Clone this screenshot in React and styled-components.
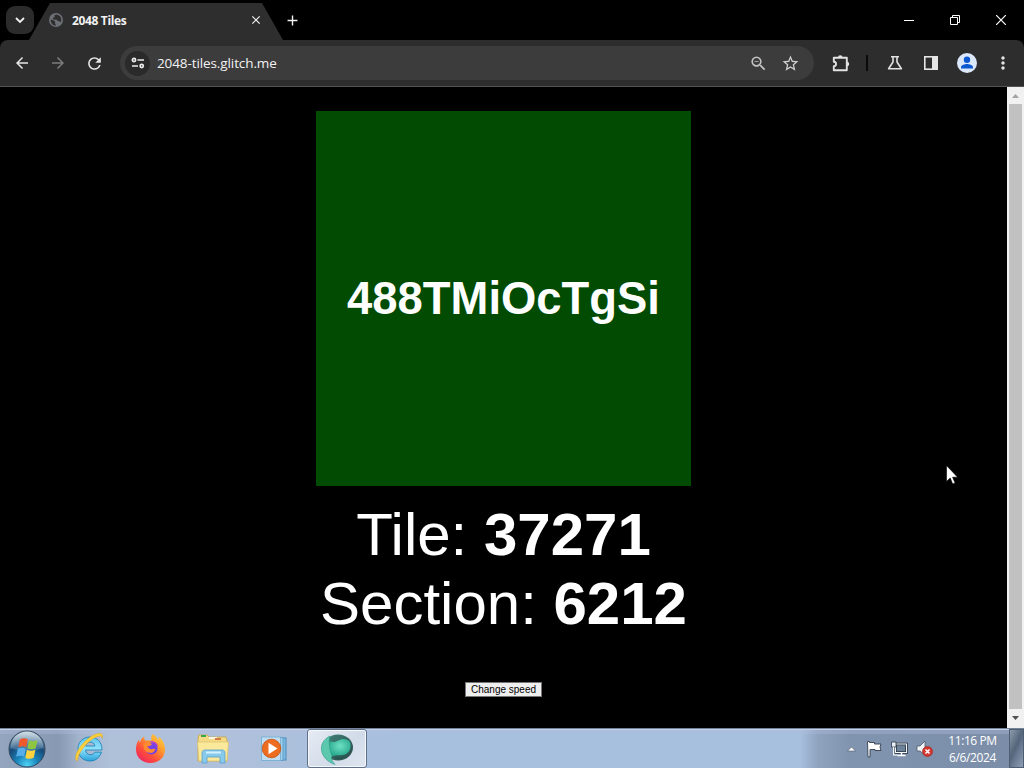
import React from 'react'
import styled, { createGlobalStyle } from 'styled-components'
import {
  MdAdd,
  MdArrowBack,
  MdArrowForward,
  MdClose,
  MdMoreVert,
  MdRefresh,
  MdStarBorder,
  MdZoomOut,
} from 'react-icons/md'

const GlobalStyle = createGlobalStyle`
  * { box-sizing: border-box; }
  body {
    margin: 0;
    background: #000;
    overflow: hidden;
  }
  svg { display: block; flex-shrink: 0; }
`

const Screen = styled.div`
  position: relative;
  width: 1024px;
  height: 768px;
  display: flex;
  flex-direction: column;
  background: #000;
  overflow: hidden;
`

/* browser chrome */

const TabStrip = styled.header`
  height: 40px;
  display: flex;
  align-items: center;
  padding-left: 6px;
  color: #f1f1f1;
`

const TabSearch = styled.button`
  width: 28px;
  height: 28px;
  padding: 0;
  border: none;
  border-radius: 9px;
  background: #2b2b2b;
  display: flex;
  align-items: center;
  justify-content: center;
`

const Tab = styled.div`
  width: 254px;
  height: 37px;
  align-self: flex-end;
  margin-left: -5px;
  padding: 0 20px 3px 20px;
  background: #2e2e2e;
  clip-path: polygon(0 100%, 21px 0, 233px 0, 100% 100%);
  display: flex;
  align-items: center;
`

const TabTitle = styled.span`
  flex: 1;
  margin-left: 9px;
  padding-top: 1px;
  font: 700 12px/16px 'Open Sans', sans-serif;
  letter-spacing: -0.35px;
  white-space: nowrap;
`

const NewTab = styled.div`
  width: 18px;
  display: flex;
  justify-content: center;
`

const WindowButtons = styled.div`
  margin-left: auto;
  display: flex;
`

const WindowButton = styled.div`
  width: 46px;
  height: 40px;
  display: flex;
  align-items: center;
  justify-content: center;
`

const Toolbar = styled.nav`
  height: 47px;
  display: flex;
  align-items: center;
  padding-left: 4px;
  background: #2d2d2d;
  border-bottom: 1px solid #545454;
  border-radius: 8px 8px 0 0;
  color: #e6e6e6;
`

const Slot = styled.div`
  width: ${(p) => p.$w || 36}px;
  height: 34px;
  flex-shrink: 0;
  display: flex;
  align-items: center;
  justify-content: center;
  color: ${(p) => p.$color || 'inherit'};
`

const AddressBar = styled.div`
  width: 694px;
  height: 34px;
  flex-shrink: 0;
  margin-left: 8px;
  padding: 0 8px 0 5px;
  border-radius: 17px;
  background: #3c3c3c;
  display: flex;
  align-items: center;
`

const SiteInfo = styled.div`
  width: 25px;
  height: 25px;
  border-radius: 50%;
  background: #2a2a2a;
  display: flex;
  align-items: center;
  justify-content: center;
`

const Url = styled.span`
  flex: 1;
  margin-left: 7px;
  color: #f2f2f2;
  font: 13.5px/18px 'Open Sans', sans-serif;
  letter-spacing: -0.1px;
`

const Divider = styled.div`
  width: 2px;
  height: 16px;
  margin: 0 8px 0 -1px;
  background: #0a0a0a;
`

/* page */

const Viewport = styled.div`
  height: 641px;
  display: flex;
`

const Page = styled.main`
  flex: 1;
  padding-top: 24px;
  display: flex;
  flex-direction: column;
  align-items: center;
  color: #fff;
  font-family: 'Liberation Sans', Arial, sans-serif;
`

const Tile = styled.div`
  width: 375px;
  height: 375px;
  background: #024b02;
  display: flex;
  align-items: center;
  justify-content: center;
  font-size: 45.4px;
  font-weight: 700;
`

const Stats = styled.div`
  margin-top: 14px;
  font-size: 60px;
  line-height: 69px;
  text-align: center;
  white-space: nowrap;
`

const SpeedButton = styled.button`
  width: 77px;
  height: 15px;
  margin-top: 44px;
  padding: 0;
  border: 1px solid #767676;
  background: #efefef;
  color: #000;
  font: 10px/12px 'Liberation Sans', Arial, sans-serif;
  white-space: nowrap;
`

const ScrollTrack = styled.div`
  width: 17px;
  display: flex;
  flex-direction: column;
  align-items: center;
  background: #f1f1f1;
`

const ScrollArrow = styled.div`
  width: 17px;
  height: 17px;
  display: flex;
  align-items: center;
  justify-content: center;
`

const Thumb = styled.div`
  width: 13px;
  height: 605px;
  background: #c1c1c1;
`

/* taskbar */

const Taskbar = styled.footer`
  height: 40px;
  display: flex;
  align-items: center;
  border-top: 1px solid #75839a;
  box-shadow: inset 0 1px 0 #c3d0e6, inset 0 5px 0 rgba(178, 190, 224, 0.35);
  background: linear-gradient(90deg, #94a6bf 0, #8799b3 58px, #a3b4cc 80px, #afc0d9 110px, #aec0db 240px, #a7c0de 400px, #a7c0de 800px, #8fa3bf 818px, #8094b0 850px, #7b8da7 1024px);
`

const TaskItem = styled.div`
  width: ${(p) => p.$w || 61}px;
  height: 39px;
  display: flex;
  align-items: center;
  justify-content: center;
  ${(p) =>
    p.$active &&
    `
    border: 1px solid #5f7088;
    border-radius: 3px;
    box-shadow: inset 0 0 0 1px #f4f7fb;
    background: linear-gradient(135deg, #e6ebf3, #d2dbe9 60%, #dfe6f0);
  `}
`

const Tray = styled.div`
  margin-left: auto;
  height: 100%;
  display: flex;
  align-items: center;
`

const Clock = styled.div`
  width: 73px;
  color: #fff;
  font: 12px/17px 'Open Sans', sans-serif;
  letter-spacing: -0.4px;
  text-align: center;
  white-space: nowrap;
`

const ShowDesktop = styled.div`
  width: 15px;
  height: 100%;
  border: 1px solid #4d5d72;
  background: linear-gradient(115deg, #8c9aab, #55657a 45%, #66788f 60%, #8fa0b5);
`

const Pointer = styled.div`
  position: absolute;
  left: 946px;
  top: 465px;
`

const Globe = () => (
  <svg width="14" height="14" viewBox="0 0 14 14">
    <circle cx="7" cy="7" r="7" fill="#6c7075" />
    <path d="M1.7 6.2l3 1.2 1.4 1.2v2l1 2C4 12.6 1.4 10 1.7 6.2zM7 1.600l-1.600 1 .3 1.500-2 1 .5 1.500 3.500.2 1.400 1.500 1.200-.2.700 1.200 1-.7C13.200 5 10.700 1.700 7 1.600z" fill="#2e2e2e" />
  </svg>
)

const TuneIcon = () => (
  <svg width="14" height="12" viewBox="0 0 14 12" fill="none" stroke="#ededed" strokeWidth="1.7">
    <circle cx="3" cy="3" r="1.6" />
    <path d="M6.5 3H13M1 9h6" />
    <circle cx="10.7" cy="9" r="1.6" />
  </svg>
)

const PuzzleIcon = () => (
  <svg width="18" height="18" viewBox="0 0 18 18">
    <path d="M1.800 3.800h13v12.400h-13v-4a2.200 2.200 0 0 0 0-4.400z" fill="none" stroke="#e2e2e2" strokeWidth="1.900" strokeLinejoin="round" />
    <path d="M6 3.500a2.300 2.300 0 0 1 4.600 0zM15 7.800a2.200 2.200 0 0 1 0 4.400z" fill="#e2e2e2" />
  </svg>
)

const FlaskIcon = () => (
  <svg width="16" height="16" viewBox="0 0 16 16" fill="none" stroke="#e2e2e2" strokeWidth="1.6" strokeLinejoin="round">
    <path d="M4 1.800h8M6 2v5L1.600 13.800h12.800L10 7V2" />
  </svg>
)

const SidePanelIcon = () => (
  <svg width="14" height="14" viewBox="0 0 14 14">
    <rect x="0.8" y="0.8" width="12.4" height="12.4" fill="none" stroke="#e6e6e6" strokeWidth="1.6" />
    <path d="M8 0h6v14H8z" fill="#e6e6e6" />
  </svg>
)

const Avatar = () => (
  <svg width="20" height="20" viewBox="0 0 20 20">
    <circle cx="10" cy="10" r="10" fill="#dbe7fb" />
    <circle cx="10" cy="6.8" r="3.2" fill="#0b57d0" />
    <path d="M4 15.600v-1.300c0-2.300 4-3.300 6-3.300s6 1 6 3.300v1.300z" fill="#0b57d0" />
  </svg>
)

const StartOrb = () => (
  <svg width="38" height="38" viewBox="0 0 38 38">
    <defs>
      <radialGradient id="orb" cx="50%" cy="95%" r="85%">
        <stop offset="0" stopColor="#4fd5f5" />
        <stop offset="0.35" stopColor="#1a86bd" />
        <stop offset="0.7" stopColor="#174a78" />
        <stop offset="1" stopColor="#5f8099" />
      </radialGradient>
      <linearGradient id="gloss" x1="0" y1="0" x2="0" y2="1">
        <stop offset="0" stopColor="#eef5fa" stopOpacity="0.8" />
        <stop offset="1" stopColor="#b0cbdc" stopOpacity="0.2" />
      </linearGradient>
    </defs>
    <circle cx="19" cy="19" r="18" fill="url(#orb)" stroke="#34495e" strokeWidth="1" />
    <path d="M2.500 18a16.500 16.500 0 0 1 33 0c-9 3-23 4-33 0z" fill="url(#gloss)" />
    <g transform="translate(0.6 -1.2) scale(1.02)">
      <path d="M11 10.500c3-1.800 5.300-1.600 7.800-.2L17.300 18c-2.400-1.400-4.800-1.300-7.800 0z" fill="#ee5a2b" />
      <path d="M20 11.200c2.600 1.500 5 1.300 8.300-.2L26.600 19c-2.800 1.400-5.500 1.400-8.200 0z" fill="#8fc640" />
      <path d="M9 19.500c2.900-1.400 5.200-1.300 7.800.2L15.200 27.500c-2.300-1.400-4.800-1.300-7.800 0z" fill="#55aeea" />
      <path d="M18 20.500c2.500 1.500 5 1.300 8.300 0L24.600 28.500c-3 1.300-5.500 1.300-8.300-.2z" fill="#fed33f" />
    </g>
  </svg>
)

const ExplorerE = () => (
  <svg width="34" height="36" viewBox="0 0 34 36">
    <defs>
      <linearGradient id="ie" x1="0" y1="0" x2="0" y2="1">
        <stop offset="0" stopColor="#5fc4ee" />
        <stop offset="0.5" stopColor="#8fe2fa" />
        <stop offset="1" stopColor="#2ba2dc" />
      </linearGradient>
    </defs>
    <path d="M30 19H13.500c.3 3 2.200 4.700 5 4.700 2 0 3.500-.9 4.300-2.500h6.600C27.700 26.700 23.500 30 18 30 11 30 6 25 6 18S11 6 18 6s12 5 12 13zM13.600 15h9.300c-.5-2.500-2.200-3.900-4.600-3.900s-4.100 1.400-4.700 3.900z" fill="url(#ie)" stroke="#167db4" strokeWidth="0.8" />
    <path d="M5.500 30C1.500 29 4 20.500 10 13.500 16.500 6 25.500.9 29.500 3c1.300.7 1.200 2.500.7 4.200-.4-2.600-2.500-2.800-6-1.300C15.700 9.500 5.500 22 5.500 30z" fill="#fcd03c" stroke="#e0a51c" strokeWidth="0.5" />
  </svg>
)

const Fox = () => (
  <svg width="31" height="32" viewBox="0 0 32 33">
    <defs>
      <linearGradient id="fox" x1="1" y1="0" x2="0.2" y2="1">
        <stop offset="0" stopColor="#ffe14a" />
        <stop offset="0.4" stopColor="#ff9a2d" />
        <stop offset="0.7" stopColor="#ff4f3c" />
        <stop offset="1" stopColor="#ef2260" />
      </linearGradient>
    </defs>
    <path d="M18 1c3 1.700 4.600 3.400 5.700 6 .8-.7.900-2 .5-3.400C28.500 6.600 31 11.500 31 17c0 8-6.500 14-15 14S1 25 1 17c0-4 1.200-7.800 3-10 .1 1.300.6 2.200 1 2.700C6 6.600 8 4.300 9.700 3.700c-.5 1.800 0 3.300.8 4.100C13 7.500 15.500 7 17.200 8c-.8-2.400-.5-5 .8-7z" fill="url(#fox)" />
    <circle cx="17" cy="16" r="6.3" fill="#7542e5" />
    <path d="M9 11c3-1.500 6.500-1.500 8.500.5-1 1.900-3.800 1.800-5 2.500 1.200 1 2.200 2.900 4.500 2.800 1.600-.1 2.500-.9 4-.4-.8 3.200-3.500 4.600-6.200 4C10.500 19.600 8 16 9 11z" fill="#ff8a30" />
    <path d="M15 9c3.500-1.700 8.500 1 9 5.500-2-3-5-4.500-9-5.500z" fill="#b134dc" />
  </svg>
)

const Folder = () => (
  <svg width="34" height="32" viewBox="0 0 34 32">
    <path d="M2 5l1-3h8l2 2h17l1 3v21H2z" fill="#f2db84" stroke="#c7a64c" strokeWidth="0.8" />
    <path d="M5 2h5v2H5z" fill="#3ca54b" />
    <path d="M13 4h8v2h-8z" fill="#faf6e4" />
    <path d="M19 5h6v2h-6z" fill="#d87a45" />
    <path d="M1.500 9h31L31 28H3z" fill="#fae99a" stroke="#dcc26b" strokeWidth="0.7" />
    <path d="M6 30V20c0-2 1-3 3-3h17c2 0 3 1 3 3v10h-5v-6H11v6z" fill="#88caec" stroke="#5a9fca" strokeWidth="0.8" />
    <path d="M10 19.500h15" stroke="#d5f1fc" strokeWidth="2" />
  </svg>
)

const MediaPlayer = () => (
  <svg width="28" height="28" viewBox="0 0 28 28">
    <rect x="8" y="3" width="18" height="22" fill="#7fb9df" stroke="#4b8dbd" />
    <rect x="5" y="2.5" width="18" height="23" fill="#a3d0ea" stroke="#5d9fca" />
    <rect x="1.5" y="2" width="19" height="23.500" fill="#c0dcf0" stroke="#7db3d6" />
    <circle cx="11.5" cy="13.5" r="9.3" fill="#ec6c20" stroke="#ca5110" strokeWidth="0.8" />
    <path d="M8.500 7.800v11.400l9-5.700z" fill="#fff" />
  </svg>
)

const GreenGlobe = () => (
  <svg width="34" height="34" viewBox="0 0 34 34">
    <defs>
      <radialGradient id="swirl" cx="50%" cy="40%" r="60%">
        <stop offset="0" stopColor="#6fe0c3" />
        <stop offset="1" stopColor="#27a88d" />
      </radialGradient>
      <linearGradient id="rim" x1="0" y1="0" x2="1" y2="1">
        <stop offset="0" stopColor="#3f857b" />
        <stop offset="1" stopColor="#2b4a48" />
      </linearGradient>
    </defs>
    <ellipse cx="18" cy="15.5" rx="15" ry="13" fill="url(#rim)" />
    <path d="M10 4C4 7 .8 12 1.500 18c.7 6 5 11.500 13.500 14.500-3.500-4-4-6-3-9C10 19 8 10 10 4z" fill="#5cc9ae" stroke="#2f9c86" strokeWidth="0.6" />
    <path d="M10 9c3 2 5 1 8-.5 4-2 9-2.500 12 1.500 2 6-1 12-7 13-5 .8-7.500-.5-10 1.500-3.500-4-4.500-10-3-15.500z" fill="url(#swirl)" />
    <path d="M13 24c3 2 8 2.500 12-.5-3 4-8 5-12 .5z" fill="#24544c" />
  </svg>
)

const TrayArrow = () => (
  <svg width="9" height="6" viewBox="0 0 9 6">
    <path d="M0.500 5L4.500 1 8.500 5z" fill="#fff" stroke="#4d5b6d" strokeWidth="0.6" />
  </svg>
)

const Flag = () => (
  <svg width="17" height="18" viewBox="0 0 17 18">
    <path d="M1.500 1.500h2v1h5v1.500h6.500l-1 3 1 3.500H9V9.500H4V17H2z" fill="#fff" stroke="#33404f" strokeWidth="0.9" />
  </svg>
)

const Network = () => (
  <svg width="17" height="16" viewBox="0 0 17 16">
    <rect x="4.5" y="3" width="11" height="8.5" fill="#6d8198" stroke="#2b3745" strokeWidth="2.6" />
    <rect x="4.5" y="3" width="11" height="8.5" fill="none" stroke="#f4f7fa" strokeWidth="1" />
    <path d="M0.500 1h4.500v5H.5z" fill="#e9eef4" stroke="#2b3745" strokeWidth="0.8" />
    <path d="M2.700 6v8h4" fill="none" stroke="#fff" strokeWidth="1.2" />
    <path d="M6.500 14.500h8M10.500 12v2" stroke="#fff" strokeWidth="1.5" />
  </svg>
)

const Muted = () => (
  <svg width="17" height="18" viewBox="0 0 17 18">
    <path d="M1 6h3l5-5v14l-5-4H1z" fill="#f2f5f8" stroke="#4c5867" strokeWidth="0.8" />
    <circle cx="11.5" cy="11.5" r="5" fill="#d3372f" stroke="#a32823" strokeWidth="0.7" />
    <path d="M9.500 9.500l4 4M13.500 9.500l-4 4" stroke="#fff" strokeWidth="1.6" />
  </svg>
)

const App = () => {
  return (
    <Screen>
      <GlobalStyle />
      <TabStrip>
        <TabSearch>
          <svg width="10" height="7" viewBox="0 0 10 7" fill="none" stroke="#f1f1f1" strokeWidth="1.8">
            <path d="M1 1l4 4 4-4" />
          </svg>
        </TabSearch>
        <Tab>
          <Globe />
          <TabTitle>2048 Tiles</TabTitle>
          <MdClose size={14} />
        </Tab>
        <NewTab>
          <MdAdd size={17} />
        </NewTab>
        <WindowButtons>
          <WindowButton>
            <svg width="10" height="10" viewBox="0 0 10 10"><path d="M0 5.500h10" stroke="#fff" /></svg>
          </WindowButton>
          <WindowButton>
            <svg width="10" height="10" viewBox="0 0 10 10" fill="none" stroke="#fff">
              <path d="M.5 2.500h7v7h-7zM2.500 2.500v-2h7v7h-2" />
            </svg>
          </WindowButton>
          <WindowButton>
            <svg width="10" height="10" viewBox="0 0 10 10"><path d="M0 0l10 10M10 0L0 10" stroke="#fff" strokeWidth="1.2" /></svg>
          </WindowButton>
        </WindowButtons>
      </TabStrip>

      <Toolbar>
        <Slot><MdArrowBack size={18} /></Slot>
        <Slot $color="#7c7c7c"><MdArrowForward size={18} /></Slot>
        <Slot><MdRefresh size={19} /></Slot>
        <AddressBar>
          <SiteInfo><TuneIcon /></SiteInfo>
          <Url>2048-tiles.glitch.me</Url>
          <Slot $w={32} $color="#c4c4c4"><MdZoomOut size={19} /></Slot>
          <Slot $w={32} $color="#d0d0d0"><MdStarBorder size={19} /></Slot>
        </AddressBar>
        <Slot $w={53}><PuzzleIcon /></Slot>
        <Divider />
        <Slot $w={37}><FlaskIcon /></Slot>
        <Slot><SidePanelIcon /></Slot>
        <Slot><Avatar /></Slot>
        <Slot><MdMoreVert size={20} /></Slot>
      </Toolbar>

      <Viewport>
        <Page>
          <Tile>488TMiOcTgSi</Tile>
          <Stats>
            Tile: <b>37271</b>
            <br />
            Section: <b>6212</b>
          </Stats>
          <SpeedButton>Change speed</SpeedButton>
        </Page>
        <ScrollTrack>
          <ScrollArrow>
            <svg width="7" height="4" viewBox="0 0 7 4"><path d="M0 4l3.500-4L7 4z" fill="#a3a3a3" /></svg>
          </ScrollArrow>
          <Thumb />
          <ScrollArrow>
            <svg width="7" height="4" viewBox="0 0 7 4"><path d="M0 0l3.500 4L7 0z" fill="#505050" /></svg>
          </ScrollArrow>
        </ScrollTrack>
      </Viewport>

      <Taskbar>
        <TaskItem $w={54}><StartOrb /></TaskItem>
        <TaskItem $w={69}><ExplorerE /></TaskItem>
        <TaskItem $w={55}><Fox /></TaskItem>
        <TaskItem $w={70}><Folder /></TaskItem>
        <TaskItem $w={52}><MediaPlayer /></TaskItem>
        <TaskItem $w={7} />
        <TaskItem $w={60} $active><GreenGlobe /></TaskItem>
        <Tray>
          <Slot $w={22}><TrayArrow /></Slot>
          <Slot $w={25}><Flag /></Slot>
          <Slot $w={25}><Network /></Slot>
          <Slot $w={24}><Muted /></Slot>
          <Clock>
            11:16 PM
            <br />
            6/6/2024
          </Clock>
          <ShowDesktop />
        </Tray>
      </Taskbar>

      <Pointer>
        <svg width="12" height="20" viewBox="0 0 12 20">
          <path d="M.5.500v16l3.700-3.500 2.500 6 2.400-1-2.500-5.800h5z" fill="#fff" stroke="#000" strokeWidth="0.6" />
        </svg>
      </Pointer>
    </Screen>
  )
}

export default App
